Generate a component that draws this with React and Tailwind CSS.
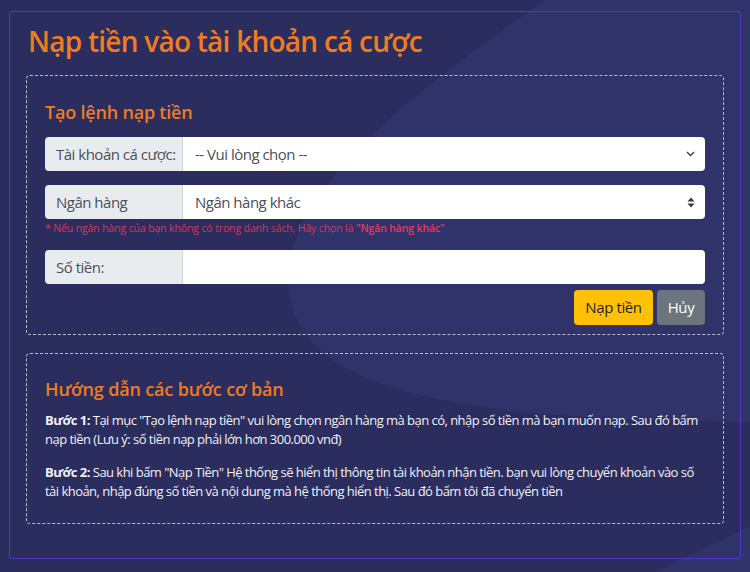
import React from 'react';

function Chevron() {
  return (
    <svg width="9" height="6" viewBox="0 0 9 6" className="text-[#343a40]">
      <path d="M1 1l3.5 3.5L8 1" fill="none" stroke="currentColor" strokeWidth="1.3" />
    </svg>
  );
}

function UpDown() {
  return (
    <svg width="8" height="11" viewBox="0 0 8 11" className="text-[#343a40]">
      <path d="M4 0.5L7.5 4.5H0.5Z M4 10.5L0.5 6.5H7.5Z" fill="currentColor" />
    </svg>
  );
}

function Row({ label, value, icon, className = '' }) {
  return (
    <div className={`flex h-[34px] text-[15px] tracking-[-0.5px] text-[#495057] ${className}`}>
      <div className="flex w-[138px] items-center whitespace-nowrap rounded-l-[4px] border-r border-[#ced4da] bg-[#e9ecef] pl-[11px]">
        {label}
      </div>
      <div className="flex flex-1 items-center justify-between rounded-r-[4px] bg-white pl-[12px] pr-[10px]">
        <span>{value}</span>
        {icon}
      </div>
    </div>
  );
}

export default function App() {
  return (
    <div className="relative min-h-[572px] overflow-hidden bg-[#2b2d5e] px-[9px] pt-[11px] pb-[13px] font-['Open_Sans',sans-serif]">
      <svg className="absolute inset-0 h-full w-full" viewBox="0 0 750 572" preserveAspectRatio="none">
        <path d="M545 0C460 60 330 150 295 240C275 300 300 350 360 375C440 410 560 420 750 422L750 0Z" fill="#30336a" />
        <path d="M655 572L750 526L750 572Z" fill="#30336a" />
      </svg>

      <div className="relative rounded-[3px] border border-[#5636c8] px-4 pt-[13px] pb-[34px]">
        <h1 className="pl-[2px] text-[28px] leading-[1.2] font-semibold tracking-[-0.75px] text-[#ef7b22]">
          Nạp tiền vào tài khoản cá cược
        </h1>

        <div className="mt-4 rounded-[4px] border border-dashed border-[#b9bacb] px-[18px] pt-[26px] pb-[9px]">
          <h2 className="text-[18px] leading-[1.2] font-semibold tracking-[-0.2px] text-[#ef7b22]">Tạo lệnh nạp tiền</h2>

          <Row className="mt-[14px]" label="Tài khoản cá cược:" value="-- Vui lòng chọn --" icon={<Chevron />} />
          <Row className="mt-[14px]" label="Ngân hàng" value="Ngân hàng khác" icon={<UpDown />} />
          <p className="mt-[2px] text-[10.5px] leading-[15px] tracking-[-0.13px] text-[#cf3a60]">
            * Nếu ngân hàng của bạn không có trong danh sách, Hãy chọn là{' '}
            <b className="font-semibold text-[#e23a62]">"Ngân hàng khác"</b>
          </p>
          <Row className="mt-[14px]" label="Số tiền:" value="" />

          <div className="mt-[6px] flex justify-end gap-[4px] text-[15px] tracking-[-0.4px]">
            <button className="h-[35px] w-[79px] rounded-[4px] bg-[#ffc107] text-[#212529]">Nạp tiền</button>
            <button className="h-[35px] w-[48px] rounded-[4px] bg-[#6c757d] text-white">Hủy</button>
          </div>
        </div>

        <div className="mt-[18px] rounded-[4px] border border-dashed border-[#b9bacb] px-[18px] pt-[25px] pb-[21px] text-[13px] leading-[19.5px] tracking-[-0.53px] text-[#f1f1f6]">
          <h2 className="text-[18px] leading-[1.2] font-semibold tracking-[-0.15px] text-[#ef7b22]">Hướng dẫn các bước cơ bản</h2>
          <p className="mt-[10px]">
            <b className="font-bold">Bước 1:</b> Tại mục "Tạo lệnh nạp tiền" vui lòng chọn ngân hàng mà bạn có, nhập số tiền mà bạn muốn nạp. Sau đó bấm nạp tiền (Lưu ý: số tiền nạp phải lớn hơn 300.000 vnđ)
          </p>
          <p className="mt-[13px]">
            <b className="font-bold">Bước 2:</b> Sau khi bấm "Nạp Tiền" Hệ thống sẽ hiển thị thông tin tài khoản nhận tiền. bạn vui lòng chuyển khoản vào số tài khoản, nhập đúng số tiền và nội dung mà hệ thống hiển thị. Sau đó bấm tôi đã chuyển tiền
          </p>
        </div>
      </div>
    </div>
  );
}
